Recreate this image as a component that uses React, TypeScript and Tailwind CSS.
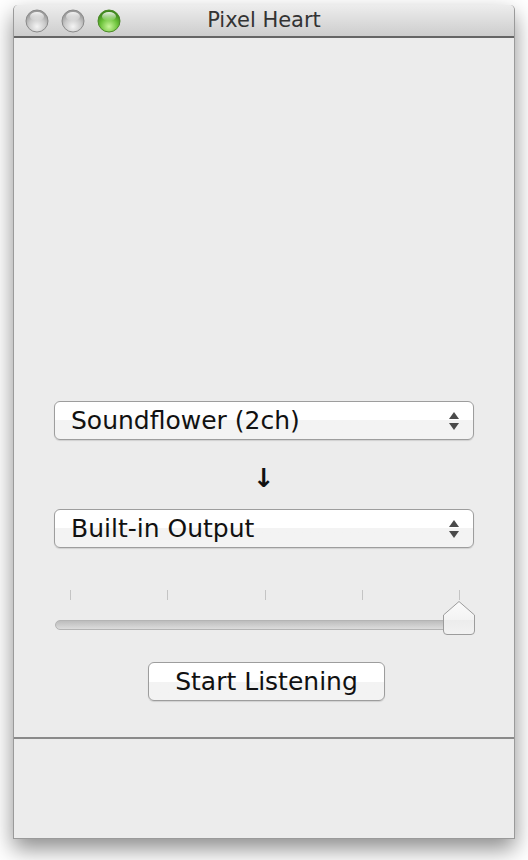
import React from "react";

function Light({ green = false }: { green?: boolean }) {
  const id = green ? "lg" : "lgray";
  return (
    <svg width="24" height="24" viewBox="0 0 24 24">
      <defs>
        <radialGradient id={id + "b"} cx="50%" cy="75%" r="65%">
          <stop offset="0%" stopColor={green ? "#c8f59a" : "#f4f4f4"} />
          <stop offset="60%" stopColor={green ? "#6cc33a" : "#c9c9c9"} />
          <stop offset="100%" stopColor={green ? "#3f8a1c" : "#9a9a9a"} />
        </radialGradient>
        <linearGradient id={id + "h"} x1="0" y1="0" x2="0" y2="1">
          <stop offset="0%" stopColor="#ffffff" stopOpacity="0.9" />
          <stop offset="100%" stopColor="#ffffff" stopOpacity="0" />
        </linearGradient>
      </defs>
      <circle cx="12" cy="12" r="11" fill={`url(#${id}b)`} stroke={green ? "#4d8a2a" : "#8a8a8a"} strokeWidth="1" />
      <ellipse cx="12" cy="7.5" rx="7" ry="4.5" fill={`url(#${id}h)`} />
    </svg>
  );
}

function Popup({ label }: { label: string }) {
  return (
    <div className="flex h-[39px] items-center justify-between rounded-[6px] border border-[#9d9d9d] bg-gradient-to-b from-white from-50% to-[#f3f3f3] to-50% pl-[16px] pr-[13px] shadow-[0_1px_1px_rgba(0,0,0,0.12)]">
      <span className="text-[25px] leading-none text-[#111]">{label}</span>
      <svg width="12" height="20" viewBox="0 0 12 20">
        <path d="M6 1 L11 8 L1 8 Z" fill="#4a4a4a" />
        <path d="M1 12 L11 12 L6 19 Z" fill="#4a4a4a" />
      </svg>
    </div>
  );
}

function Slider() {
  const ticks = [0, 1, 2, 3, 4];
  return (
    <div className="relative h-[46px]">
      <div className="flex justify-between pl-[16px] pr-[14px]">
        {ticks.map((t) => (
          <div key={t} className="h-[10px] w-px bg-[#c4c4c4]" />
        ))}
      </div>
      <div className="mx-[1px] mt-[20px] h-[10px] w-[400px] rounded-full border border-[#b4b4b4] bg-gradient-to-b from-[#bdbdbd] to-[#dcdcdc]" />
      <svg className="absolute right-[-2px] top-[10px]" width="34" height="36" viewBox="0 0 34 36">
        <defs>
          <linearGradient id="knob" x1="0" y1="0" x2="0" y2="1">
            <stop offset="0%" stopColor="#fbfbfb" />
            <stop offset="55%" stopColor="#f3f3f3" />
            <stop offset="56%" stopColor="#ececec" />
            <stop offset="100%" stopColor="#f2f2f2" />
          </linearGradient>
        </defs>
        <path
          d="M5 34.5 Q1.5 34.5 1.5 31 L1.5 15 L17 1.5 L32.5 15 L32.5 31 Q32.5 34.5 29 34.5 Z"
          fill="url(#knob)"
          stroke="#9c9c9c"
          strokeWidth="1"
        />
      </svg>
    </div>
  );
}

export default function App() {
  return (
    <div className="h-[860px] w-[528px] bg-white pl-[13px] pt-[5px] font-['DejaVu_Sans',sans-serif]">
      <div className="flex h-[834px] w-[502px] flex-col rounded-t-[5px] border-x border-b border-[#9a9a9a] bg-[#ececec] shadow-[0_10px_22px_rgba(0,0,0,0.45)]">
        <div className="relative flex h-[33px] items-center rounded-t-[5px] border-b-2 border-[#656565] bg-gradient-to-b from-[#ededed] to-[#cdcdcd] px-[11px]">
          <div className="flex gap-[12px]">
            <Light />
            <Light />
            <Light green />
          </div>
          <span className="absolute inset-x-0 text-center text-[21px] leading-none text-[#333]">
            Pixel Heart
          </span>
        </div>

        <div className="flex flex-1 flex-col px-[40px] pt-[363px]">
          <Popup label="Soundflower (2ch)" />
          <div className="flex h-[69px] items-center justify-center pt-[6px] text-[26px] font-bold leading-none text-[#111]">
            ↓
          </div>
          <Popup label="Built-in Output" />
          <div className="mt-[42px]">
            <Slider />
          </div>
          <div className="mt-[26px] flex justify-center pl-[5px]">
            <button className="h-[39px] w-[237px] rounded-[6px] border border-[#9d9d9d] bg-gradient-to-b from-white from-50% to-[#f3f3f3] to-50% text-[25px] leading-none text-[#111] shadow-[0_1px_1px_rgba(0,0,0,0.12)]">
              Start Listening
            </button>
          </div>
        </div>

        <div className="h-[101px] border-t-2 border-[#8a8a8a]" />
      </div>
    </div>
  );
}
